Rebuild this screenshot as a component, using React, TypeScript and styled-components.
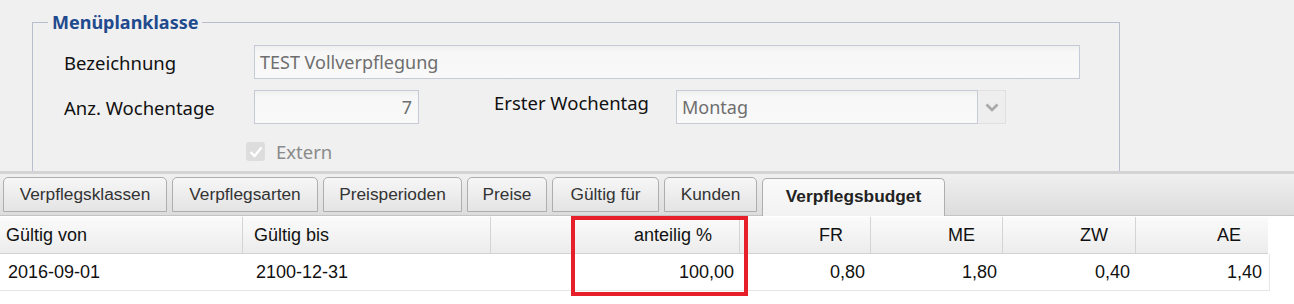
import React from 'react'
import styled, { createGlobalStyle } from 'styled-components'

const GlobalStyle = createGlobalStyle`
  html, body {
    margin: 0;
    padding: 0;
    background: #ffffff;
    overflow: hidden;
  }
`

const Page = styled.div`
  position: relative;
  width: 1294px;
  height: 304px;
  background: #ffffff;
  font-family: 'Liberation Sans', Arial, sans-serif;
`

const FormArea = styled.div`
  height: 171px;
  background: #f0f0f0;
  padding-top: 10px;
  box-sizing: border-box;
  overflow: hidden;
`

const Fieldset = styled.fieldset`
  margin: 0 0 0 32px;
  width: 1088px;
  height: 170px;
  box-sizing: border-box;
  border: 1px solid #b9bdcc;
  border-bottom: none;
  padding: 11px 0 0 31px;
`

const Legend = styled.legend`
  margin-left: -16px;
  padding: 0 4px;
  font-family: 'Noto Sans', 'Open Sans', sans-serif;
  font-weight: 700;
  font-size: 18px;
  color: #1f4a8e;
  line-height: 24px;
`

const FormRow = styled.div`
  display: flex;
  align-items: center;
  height: 34px;
  margin-bottom: 11px;
`

const Label = styled.label<{ w: number }>`
  width: ${(p) => p.w}px;
  flex: none;
  font-family: 'Noto Sans', 'Open Sans', sans-serif;
  font-size: 18.5px;
  color: #111;
`

const Field = styled.div<{ w: number; right?: boolean }>`
  width: ${(p) => p.w}px;
  height: 34px;
  box-sizing: border-box;
  flex: none;
  display: flex;
  align-items: center;
  justify-content: ${(p) => (p.right ? 'flex-end' : 'flex-start')};
  padding: 0 6px 0 5px;
  border: 1px solid #c6c9d6;
  background: linear-gradient(#efefef, #f7f7f7 6px, #f9f9f9);
  font-family: 'Noto Sans', 'Open Sans', sans-serif;
  font-size: 18px;
  color: #6e6e6e;
`

const Select = styled.div`
  display: flex;
  flex: none;
  margin-left: 75px;
`

const SelectButton = styled.div`
  width: 28px;
  height: 34px;
  box-sizing: border-box;
  display: flex;
  align-items: center;
  justify-content: center;
  border: 1px solid #e0e0e0;
  border-left: none;
  background: #eeeeee;
`

const CheckRow = styled.div`
  display: flex;
  align-items: center;
  gap: 11px;
  margin-left: 182px;
  margin-top: 15px;
  font-family: 'Noto Sans', 'Open Sans', sans-serif;
  font-size: 18.5px;
  color: #8a8a8a;
`

const CheckBox = styled.span`
  width: 19px;
  height: 19px;
  border-radius: 3px;
  background: #dddddd;
  display: flex;
  align-items: center;
  justify-content: center;
`

const Divider = styled.div`
  height: 3px;
  background: #d4d4d4;
`

const TabStrip = styled.div`
  height: 42px;
  box-sizing: border-box;
  display: flex;
  align-items: flex-end;
  gap: 5px;
  padding-left: 3px;
  background: linear-gradient(#f0f0f0, #dcdcdc);
  border-bottom: 1px solid #c4c4c4;
`

const Tab = styled.div<{ w: number; active?: boolean }>`
  width: ${(p) => p.w}px;
  height: ${(p) => (p.active ? 38 : 35)}px;
  margin-bottom: ${(p) => (p.active ? -1 : 3)}px;
  box-sizing: border-box;
  flex: none;
  display: flex;
  align-items: center;
  justify-content: center;
  border: 1px solid #aeaeae;
  border-bottom: ${(p) => (p.active ? 'none' : '1px solid #aeaeae')};
  border-radius: 5px 5px 0 0;
  background: ${(p) =>
    p.active
      ? 'linear-gradient(#fafafa, #f2f2f2)'
      : 'linear-gradient(#f6f6f6, #e4e4e4)'};
  font-size: 17.3px;
  font-weight: ${(p) => (p.active ? 700 : 400)};
  color: ${(p) => (p.active ? '#222' : '#333')};
  padding-bottom: ${(p) => (p.active ? 2 : 0)}px;
`

const Table = styled.div`
  width: 1270px;
  margin-top: 1px;
`

const HeaderRow = styled.div`
  display: flex;
  height: 36px;
  width: 1268px;
  border-bottom: 1px solid #d2d2d2;
  background: linear-gradient(#fbfbfb, #ececec);
`

const HeadCell = styled.div<{ w: number; right?: boolean; indent?: number; last?: boolean }>`
  width: ${(p) => p.w}px;
  box-sizing: border-box;
  flex: none;
  display: flex;
  align-items: center;
  justify-content: ${(p) => (p.right ? 'flex-end' : 'flex-start')};
  padding-left: ${(p) => p.indent ?? 6}px;
  padding-right: ${(p) => (p.right ? 27 : 0)}px;
  border-right: ${(p) => (p.last ? 'none' : '1px solid #d4d4d4')};
  font-size: 18px;
  color: #111;
`

const DataRow = styled.div`
  display: flex;
  height: 37px;
  box-sizing: border-box;
  border-bottom: 1px solid #e6e6e6;
  border-right: 1px solid #e6e6e6;
  background: #ffffff;
`

const DataCell = styled.div<{ w: number; right?: boolean; indent?: number }>`
  width: ${(p) => p.w}px;
  box-sizing: border-box;
  flex: none;
  display: flex;
  align-items: center;
  justify-content: ${(p) => (p.right ? 'flex-end' : 'flex-start')};
  padding-left: ${(p) => p.indent ?? 8}px;
  padding-right: ${(p) => (p.right ? 6 : 0)}px;
  font-size: 18px;
  color: #111;
`

// annotation frame drawn over the table
const Highlight = styled.div`
  position: absolute;
  left: 571px;
  top: 216px;
  width: 177px;
  height: 80px;
  box-sizing: border-box;
  border: 4px solid #e61f2a;
`

const tabs = [
  { label: 'Verpflegsklassen', w: 164 },
  { label: 'Verpflegsarten', w: 146 },
  { label: 'Preisperioden', w: 139 },
  { label: 'Preise', w: 80 },
  { label: 'Gültig für', w: 107 },
  { label: 'Kunden', w: 93 },
  { label: 'Verpflegsbudget', w: 183, active: true },
]

const columns = [
  { head: 'Gültig von', w: 243, hi: 6, di: 8, value: '2016-09-01' },
  { head: 'Gültig bis', w: 248, hi: 11, di: 13, value: '2100-12-31' },
  { head: 'anteilig %', w: 249, right: true, value: '100,00' },
  { head: 'FR', w: 131, right: true, value: '0,80' },
  { head: 'ME', w: 132, right: true, value: '1,80' },
  { head: 'ZW', w: 133, right: true, value: '0,40' },
  { head: 'AE', w: 132, right: true, value: '1,40' },
]

const Chevron = () => (
  <svg width="14" height="9" viewBox="0 0 14 9">
    <path d="M1.5 1.5 L7 7 L12.5 1.5" fill="none" stroke="#a8a8a8" strokeWidth="2.6" />
  </svg>
)

const Check = () => (
  <svg width="14" height="12" viewBox="0 0 14 12">
    <path d="M1.5 6 L5.5 10 L12.5 1.5" fill="none" stroke="#ffffff" strokeWidth="2.4" />
  </svg>
)

export default function App() {
  return (
    <Page>
      <GlobalStyle />
      <FormArea>
        <Fieldset>
          <Legend>Menüplanklasse</Legend>
          <FormRow>
            <Label w={190}>Bezeichnung</Label>
            <Field w={826}>TEST Vollverpflegung</Field>
          </FormRow>
          <FormRow>
            <Label w={190}>Anz. Wochentage</Label>
            <Field w={165} right>
              7
            </Field>
            <Select>
              <Label w={182}>Erster Wochentag</Label>
              <Field w={302}>Montag</Field>
              <SelectButton>
                <Chevron />
              </SelectButton>
            </Select>
          </FormRow>
          <CheckRow>
            <CheckBox>
              <Check />
            </CheckBox>
            Extern
          </CheckRow>
        </Fieldset>
      </FormArea>
      <Divider />
      <TabStrip>
        {tabs.map((t) => (
          <Tab key={t.label} w={t.w} active={t.active}>
            {t.label}
          </Tab>
        ))}
      </TabStrip>
      <Table>
        <HeaderRow>
          {columns.map((c, i) => (
            <HeadCell
              key={c.head}
              w={c.w}
              right={c.right}
              indent={c.hi}
              last={i === columns.length - 1}
            >
              {c.head}
            </HeadCell>
          ))}
        </HeaderRow>
        <DataRow>
          {columns.map((c) => (
            <DataCell key={c.head} w={c.w} right={c.right} indent={c.di}>
              {c.value}
            </DataCell>
          ))}
        </DataRow>
      </Table>
      <Highlight />
    </Page>
  )
}
